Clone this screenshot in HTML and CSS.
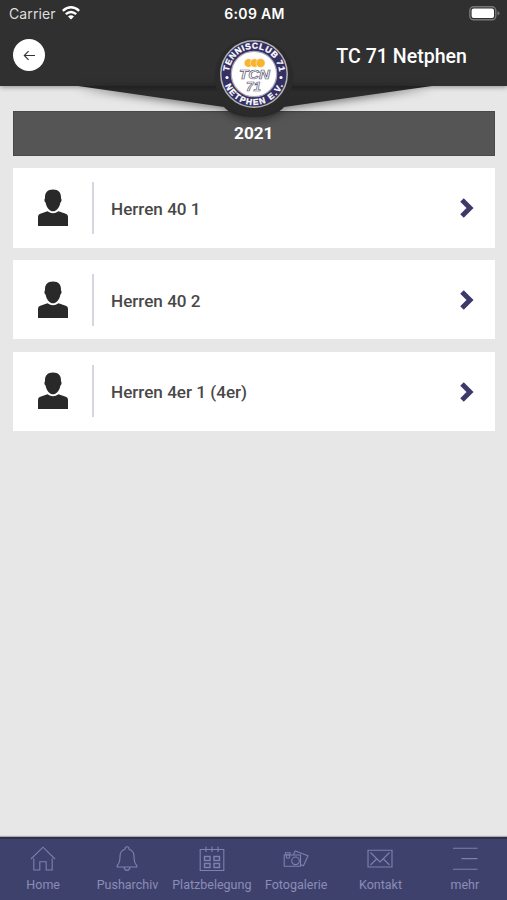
FILE: index.html
```html
<!DOCTYPE html>
<html lang="de">
<head>
<meta charset="utf-8">
<meta name="viewport" content="width=device-width, initial-scale=1">
<title>TC 71 Netphen</title>
<link rel="stylesheet" href="styles.css">
</head>
<body>
<div class="app">
  <header class="header">
    <div class="status">
      <div class="carrier"><span>Carrier</span>
        <svg class="wifi" viewBox="0 0 18 14"><g fill="none" stroke="#fff" stroke-width="2.4"><path d="M.8 4.8Q9-2.1 17.2 4.8"/><path d="M3.8 8.2Q9 3.7 14.2 8.2"/></g><path d="M6 10.4Q9 8 12 10.4L9 13.6Z" fill="#fff"/></svg>
      </div>
      <div class="clock">6:09 AM</div>
      <svg class="battery" viewBox="0 0 31 15"><rect x=".8" y=".8" width="26" height="13" rx="3.8" fill="none" stroke="#777" stroke-width="1.4"/><rect x="2.6" y="2.6" width="22.4" height="9.4" rx="2" fill="#fff"/><path d="M28.5 5v4.6q2-.8 2-2.3t-2-2.3" fill="#777"/></svg>
    </div>
    <div class="titlebar">
      <button class="back" aria-label="Zurück"><svg viewBox="0 0 14 12"><path d="M13 6H1.5M6 1.2L1.3 6L6 10.8" fill="none" stroke="#333" stroke-width="1.2"/></svg></button>
      <h1 class="title">TC 71 Netphen</h1>
    </div>
    <svg class="crest" viewBox="0 0 507 130">
      <defs>
        <path id="arc-top" d="M228.7 74a25.3 25.3 0 0 1 50.6 0"/>
        <path id="arc-bottom" d="M223 74a31 31 0 0 0 62 0"/>
        <linearGradient id="wing" x1="0" y1="86" x2="0" y2="108" gradientUnits="userSpaceOnUse"><stop offset="0" stop-color="#202020"/><stop offset=".3" stop-color="#2c2c2c"/><stop offset="1" stop-color="#292929"/></linearGradient>
      </defs>
      <path class="wings" d="M78 86H432L284 107Q276 117 254 117T224 107Z" fill="url(#wing)"/>
      <circle cx="254" cy="77" r="39.5" fill="#2b2b2b"/>
      <circle cx="254" cy="74" r="33.2" fill="#343064" stroke="#b4b4b4" stroke-width="1.5"/>
      <circle cx="254" cy="74" r="22.7" fill="#fff" stroke="#aaa9b4" stroke-width="1.2"/>
      <text class="ring"><textPath href="#arc-top" startOffset="50%" text-anchor="middle" textLength="74">TENNISCLUB 71</textPath></text>
      <text class="ring"><textPath href="#arc-bottom" startOffset="50%" text-anchor="middle" textLength="74">NETPHEN E.V.</textPath></text>
      <circle cx="227" cy="77.5" r="1.6" fill="#fff"/><circle cx="281" cy="77.5" r="1.6" fill="#fff"/>
      <g fill="#f8b42d" stroke="#fff" stroke-width=".5"><circle cx="248.5" cy="63" r="4.3"/><circle cx="254.5" cy="63" r="4.3"/><circle cx="260.6" cy="63" r="4.5"/></g>
      <g class="mono"><text x="239" y="79.3" textLength="31" lengthAdjust="spacingAndGlyphs">TCN</text><text x="246" y="91" textLength="15" lengthAdjust="spacingAndGlyphs">71</text></g>
    </svg>
  </header>

  <main class="content">
    <h2 class="year">2021</h2>
    <a class="team"><svg class="person" viewBox="0 0 30 38"><path d="M15 .5C9.5.5 6.7 3.5 7 9.4C6.1 9.6 6.4 13 7.6 13.5C8.5 19 12 22.3 15 22.3S21.5 19 22.4 13.5C23.6 13 23.9 9.6 23 9.4C23.3 3.5 20.5.5 15 .5Z"/><path d="M0 37V28Q0 25.2 3 24.4L9.5 22.3Q15 26.2 20.5 22.3L27 24.4Q30 25.2 30 28V37Z"/></svg><span class="name">Herren 40 1</span><svg class="chevron" viewBox="0 0 14 20"><path d="M2 2L10 10L2 18"/></svg></a>
    <a class="team"><svg class="person" viewBox="0 0 30 38"><path d="M15 .5C9.5.5 6.7 3.5 7 9.4C6.1 9.6 6.4 13 7.6 13.5C8.5 19 12 22.3 15 22.3S21.5 19 22.4 13.5C23.6 13 23.9 9.6 23 9.4C23.3 3.5 20.5.5 15 .5Z"/><path d="M0 37V28Q0 25.2 3 24.4L9.5 22.3Q15 26.2 20.5 22.3L27 24.4Q30 25.2 30 28V37Z"/></svg><span class="name">Herren 40 2</span><svg class="chevron" viewBox="0 0 14 20"><path d="M2 2L10 10L2 18"/></svg></a>
    <a class="team"><svg class="person" viewBox="0 0 30 38"><path d="M15 .5C9.5.5 6.7 3.5 7 9.4C6.1 9.6 6.4 13 7.6 13.5C8.5 19 12 22.3 15 22.3S21.5 19 22.4 13.5C23.6 13 23.9 9.6 23 9.4C23.3 3.5 20.5.5 15 .5Z"/><path d="M0 37V28Q0 25.2 3 24.4L9.5 22.3Q15 26.2 20.5 22.3L27 24.4Q30 25.2 30 28V37Z"/></svg><span class="name">Herren 4er 1 (4er)</span><svg class="chevron" viewBox="0 0 14 20"><path d="M2 2L10 10L2 18"/></svg></a>
  </main>

  <nav class="tabs">
    <a class="tab"><svg viewBox="0 0 26 26"><path d="M1 13L13 1.2L25 13M3.8 12.5V24H9.8V15.8H16.2V24H22.2V12.5"/></svg><span>Home</span></a>
    <a class="tab"><svg viewBox="0 0 26 26"><path d="M11 3.2Q11 .8 13 .8T15 3.2Q20 4.6 20 10.5C20 16 21 17.8 22.8 19.5V21H3.2V19.5C5 17.8 6 16 6 10.5Q6 4.6 11 3.2ZM10 21.2Q10.5 24.4 13 24.4T16 21.2"/></svg><span>Pusharchiv</span></a>
    <a class="tab"><svg viewBox="0 0 26 26"><path d="M1.2 3.5H24.8V24.5H1.2ZM7 .5V6M13 .5V6M19 .5V6"/><path class="bold" d="M5.5 10.5H11V14.5H5.5ZM15 10.5H20.5V14.5H15ZM5.5 17.5H11V21.5H5.5ZM15 17.5H20.5V21.5H15Z"/></svg><span>Platzbelegung</span></a>
    <a class="tab"><svg viewBox="0 0 26 26"><path d="M1.2 9H17.5V20.3H1.2ZM2.5 9V6.8H7V9M10.5 8.5L12.2 5L25 9.8L20.5 19.8L17.5 18.5"/><circle cx="12.5" cy="14.8" r="3.8"/><circle cx="5" cy="10.5" r="1.8"/></svg><span>Fotogalerie</span></a>
    <a class="tab"><svg viewBox="0 0 26 26"><path d="M1 4.3H25V21H1ZM3.5 6.5L13 16L22.5 6.5M3.5 19L9.5 13M22.5 19L16.5 13"/></svg><span>Kontakt</span></a>
    <a class="tab"><svg viewBox="0 0 26 26"><path d="M1 2.2H25.5M9.5 12.6H25.5M1 23.2H25.5"/></svg><span>mehr</span></a>
  </nav>
</div>
</body>
</html>
```
FILE: styles.css
```css
* { box-sizing: border-box; }
body { margin: 0; font-family: Roboto, sans-serif; background: #e7e7e7; }
.app { height: 900px; display: flex; flex-direction: column; overflow: hidden; }

.header { position: relative; z-index: 1; flex: none; height: 86px; background: #303030; color: #fff; box-shadow: 0 1px 5px rgba(0, 0, 0, .4); }
.status { height: 28px; display: grid; grid-template-columns: 1fr auto 1fr; align-items: center; padding: 0 7px 0 9px; font-family: Inter, sans-serif; font-size: 14px; }
.carrier { display: flex; align-items: center; gap: 6px; height: 26px; align-self: start; color: #dedede; letter-spacing: .1px; }
.wifi { width: 18px; height: 14px; }
.clock { margin-top: -1px; font-weight: 600; font-size: 14px; letter-spacing: .3px; }
.battery { width: 31px; height: 15px; justify-self: end; margin-top: -2px; }
.titlebar { height: 54px; display: flex; align-items: center; justify-content: space-between; padding: 0 40px 0 13px; }
.back { width: 32px; height: 32px; padding: 0; border: 0; border-radius: 50%; background: #fff; display: grid; place-items: center; }
.back svg { width: 13px; height: 11px; margin-top: 1px; }
.title { margin: 3px 0 0; font-size: 19.6px; font-weight: 500; line-height: 24px; }
.crest { position: absolute; top: 0; left: 0; width: 507px; height: 130px; pointer-events: none; }
.wings { filter: drop-shadow(0 2px 4px rgba(0, 0, 0, .5)); }
.ring { font: 700 8.5px "Liberation Sans", sans-serif; fill: #fff; stroke: #fff; stroke-width: .3; }
.mono { font: italic 700 13px "Liberation Sans", sans-serif; fill: #fff; stroke: #56546f; stroke-width: .65; }

.content { flex: 1; padding: 25px 12.5px 0 13px; display: flex; flex-direction: column; gap: 12.4px; }
.year { margin: 0; height: 45px; line-height: 45px; background: #555; color: #fff; text-align: center; font-size: 17.2px; font-weight: 700; box-shadow: inset 0 0 0 1px #494949; }
.team { height: 79.2px; background: #fff; display: flex; align-items: center; padding: 0 20.5px 0 25px; }
.person { width: 30px; height: 38px; fill: #292929; }
.name { flex: 1; height: 52px; margin-left: 23.5px; padding-left: 17.5px; border-left: 2px solid #d6d6df; line-height: 54px; font-size: 17.1px; font-weight: 500; color: #484848; }
.chevron { width: 14px; height: 20px; margin-top: 1px; fill: none; stroke: #3e396b; stroke-width: 5; }

.tabs { flex: none; height: 63px; border-top: 2px solid #30304d; background: #3f416d; display: grid; grid-template-columns: repeat(6, 1fr); padding-left: 1px; box-shadow: 0 -1px 1px #aaa; }
.tab { display: flex; flex-direction: column; align-items: center; padding-top: 7px; color: #8b8db6; font-size: 12.5px; line-height: 16px; white-space: nowrap; }
.tab svg { width: 26px; height: 26px; margin-bottom: 5px; fill: none; stroke: #7e80ad; stroke-width: 1.1; }
.tab .bold { stroke-width: 1.4; }
```
